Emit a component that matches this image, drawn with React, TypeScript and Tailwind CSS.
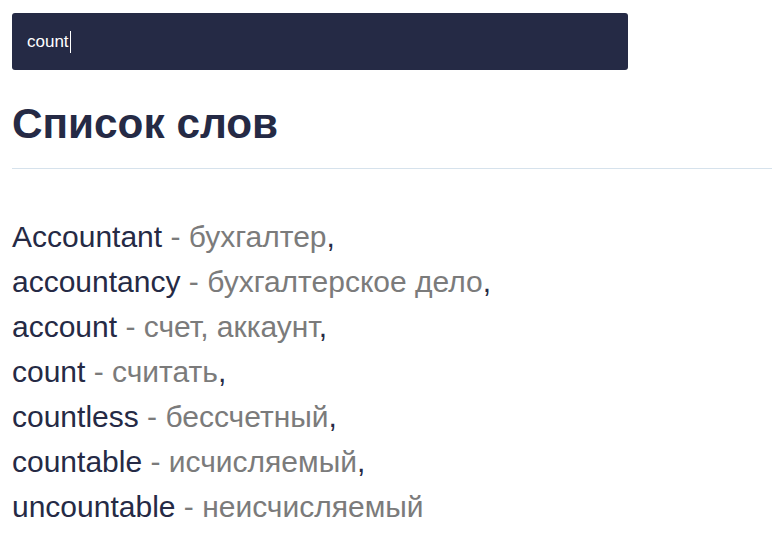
export default function App() {
  const items: [string, string][] = [
    ["Accountant", "бухгалтер"],
    ["accountancy", "бухгалтерское дело"],
    ["account", "счет, аккаунт"],
    ["count", "считать"],
    ["countless", "бессчетный"],
    ["countable", "исчисляемый"],
    ["uncountable", "неисчисляемый"],
  ];
  return (
    <div className="min-h-[549px] bg-white pl-3 pt-[13px] font-['Liberation_Sans',Arial,sans-serif] overflow-hidden">
      <div className="flex h-[57px] w-[616px] items-center rounded-[3px] bg-[#252a45] px-[15px]">
        <span className="text-[17px] text-white">count</span>
        <span className="ml-px h-[22px] w-px bg-white" />
      </div>
      <h1 className="mt-[29px] text-[42.3px] font-bold leading-[50px] text-[#252a45]">Список слов</h1>
      <div className="mt-[19px] h-px bg-[#d6e2ec]" />
      <ul className="mt-[45px] text-[30px] leading-[45px]">
        {items.map(([en, ru], i) => (
          <li key={en} className="text-[#252a45]">
            {en}
            <span className="text-[#7b7b7b]"> - {ru}</span>
            {i < items.length - 1 ? "," : ""}
          </li>
        ))}
      </ul>
    </div>
  );
}
